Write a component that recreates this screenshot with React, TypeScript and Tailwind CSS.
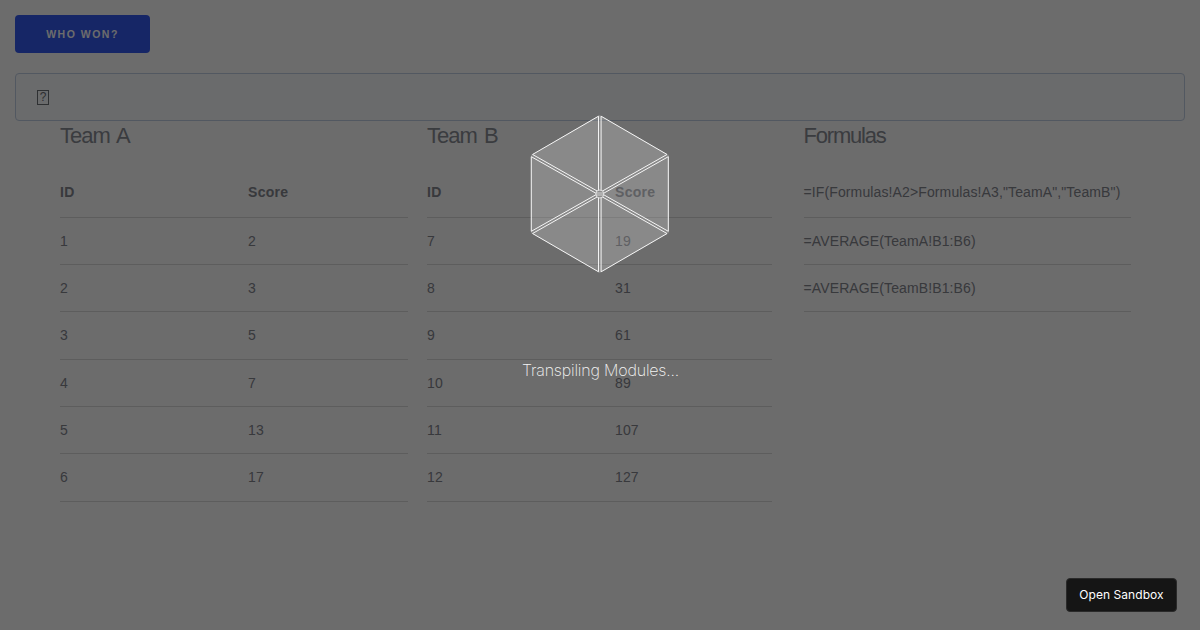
const teamA = [
  ['1', '2'],
  ['2', '3'],
  ['3', '5'],
  ['4', '7'],
  ['5', '13'],
  ['6', '17'],
];

const teamB = [
  ['7', '19'],
  ['8', '31'],
  ['9', '61'],
  ['10', '89'],
  ['11', '107'],
  ['12', '127'],
];

const formulas = [
  '=IF(Formulas!A2>Formulas!A3,"TeamA","TeamB")',
  '=AVERAGE(TeamA!B1:B6)',
  '=AVERAGE(TeamB!B1:B6)',
];

function TeamTable({ name, rows, className }: { name: string; rows: string[][]; className: string }) {
  return (
    <div className={className}>
      <h2 className="h-[46.6px] text-[22px] leading-[30px] tracking-[-1px] text-[#8a8d96] [word-spacing:2.2px]">{name}</h2>
      <div className="flex h-[50px] items-center border-b border-[#dcdcdc] text-sm font-bold tracking-[0.3px] text-[#84868f]">
        <div className="w-[188px]">ID</div>
        <div>Score</div>
      </div>
      {rows.map((row) => (
        <div key={row[0]} className="flex h-[47.33px] items-center border-b border-[#dcdcdc] text-sm tracking-[0.14px] text-[#84868f]">
          <div className="w-[188px]">{row[0]}</div>
          <div>{row[1]}</div>
        </div>
      ))}
    </div>
  );
}

function Hexagon() {
  const c = [69.8, 79];
  const outer = [
    [69.8, -1],
    [139.6, 39.5],
    [139.6, 118.5],
    [69.8, 159],
    [0, 118.5],
    [0, 39.5],
  ];
  const triangles = outer.map((p, i) => {
    const q = outer[(i + 1) % 6];
    const mx = (c[0] + p[0] + q[0]) / 3;
    const my = (c[1] + p[1] + q[1]) / 3;
    const pts = [c, p, q].map((v) => {
      const k = 0.945;
      return `${mx + (v[0] - mx) * k},${my + (v[1] - my) * k}`;
    });
    return pts.join(' ');
  });
  return (
    <svg width="140" height="160" viewBox="0 0 140 160" fill="none">
      <path d="M69.8 0 138.8 40V118L69.8 158 1 118V40Z" fill="#ffffff" fillOpacity="0.2" />
      {triangles.map((pts) => (
        <polygon key={pts} points={pts} stroke="#f6f6f6" strokeWidth="1" strokeLinejoin="round" />
      ))}
      <circle cx="69.8" cy="79" r="4" fill="#8c8c8c" stroke="#e6e6e6" strokeWidth="0.9" />
      <path d="M65.8 78H73.8M65.8 80H73.8" stroke="#e6e6e6" strokeWidth="0.8" />
    </svg>
  );
}

export default function App() {
  return (
    <div className="relative h-[630px] w-[1200px] overflow-hidden bg-white font-['Liberation_Sans',sans-serif]">
      <div className="p-[15px]">
        <button className="h-[38px] w-[135px] rounded bg-[#355af0] pt-px text-[10.5px] font-bold tracking-[1.5px] text-white">
          WHO WON?
        </button>
        <div className="mt-[20px] flex h-[48px] items-center rounded-sm border border-[#c2d0e4] bg-[#fbfcfe] pl-[21px]">
          <span className="flex h-[15px] w-[12px] items-center justify-center border border-[#6e7177] text-[12px] text-[#6e7177]">
            ?
          </span>
        </div>
        <div className="flex">
          <TeamTable name="Team A" rows={teamA} className="ml-[45px] w-[348px]" />
          <TeamTable name="Team B" rows={teamB} className="ml-[19px] w-[345px]" />
          <div className="ml-[31.5px] w-[327px]">
            <h2 className="h-[46.6px] text-[22px] leading-[30px] tracking-[-1.2px] text-[#8a8d96]">Formulas</h2>
            <div>
              {formulas.map((f) => (
                <div key={f} className="flex h-[47.33px] items-center border-b border-[#dcdcdc] text-sm tracking-[0.12px] text-[#84868f] first:h-[50px]">
                  {f}
                </div>
              ))}
            </div>
          </div>
        </div>
      </div>

      <div className="absolute inset-0 bg-black/[0.575]" />

      <div className="absolute left-[530px] top-[115px]">
        <Hexagon />
      </div>
      <div className="absolute left-0 top-[360px] w-[1201px] text-center font-['Inter',sans-serif] text-base font-extralight leading-5 tracking-[-0.18px] text-[#f4f4f4]">
        Transpiling Modules...
      </div>
      <div className="absolute left-[1066px] top-[578px] flex h-[34px] w-[111px] items-center justify-center rounded border border-[#2a2a2a] bg-[#151515] font-['Inter',sans-serif] text-xs tracking-[0.05px] text-white">
        Open Sandbox
      </div>
    </div>
  );
}
